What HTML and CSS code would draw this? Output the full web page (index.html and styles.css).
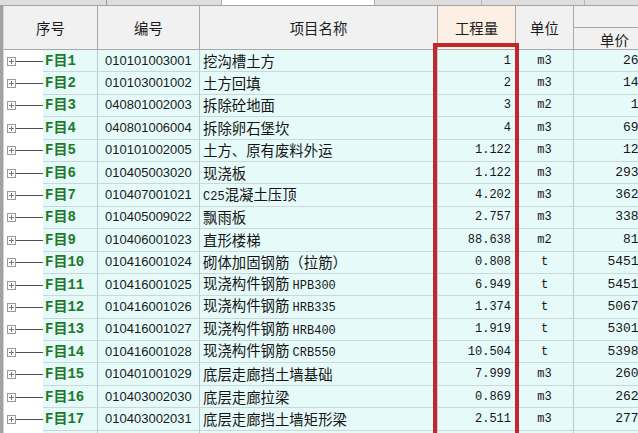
FILE: index.html
```html
<!DOCTYPE html>
<html lang="zh">
<head>
<meta charset="utf-8">
<title>分部分项</title>
<link rel="stylesheet" href="styles.css">
</head>
<body>
<div class="frame">
  <div class="topstrip">
    <span class="ts ts-1"></span>
    <span class="ts ts-2"></span>
    <span class="ts ts-3"></span>
    <span class="ts ts-4"></span>
    <span class="ts ts-5"></span>
    <span class="ts ts-6"></span>
  </div>
  <div class="gridwrap">
    <table class="grid">
      <colgroup>
        <col class="c-tree"><col class="c-lbl"><col class="c-code"><col class="c-name"><col class="c-qty"><col class="c-unit"><col class="c-price">
      </colgroup>
      <thead>
        <tr class="h1">
          <th colspan="2" rowspan="2">序号</th>
          <th rowspan="2">编号</th>
          <th rowspan="2">项目名称</th>
          <th rowspan="2" class="h-qty">工程量</th>
          <th rowspan="2">单位</th>
          <th class="h-group"></th>
        </tr>
        <tr class="h2">
          <th class="h-price">单价</th>
        </tr>
      </thead>
      <tbody>
        <tr><td class="tree"><span class="tw"><span class="box"></span><span class="ln"></span></span></td><td class="lbl">F目1</td><td class="code">010101003001</td><td class="name">挖沟槽土方</td><td class="qty">1</td><td class="unit">m3</td><td class="price">26.85</td></tr>
        <tr><td class="tree"><span class="tw"><span class="box"></span><span class="ln"></span></span></td><td class="lbl">F目2</td><td class="code">010103001002</td><td class="name">土方回填</td><td class="qty">2</td><td class="unit">m3</td><td class="price">14.92</td></tr>
        <tr><td class="tree"><span class="tw"><span class="box"></span><span class="ln"></span></span></td><td class="lbl">F目3</td><td class="code">040801002003</td><td class="name">拆除砼地面</td><td class="qty">3</td><td class="unit">m2</td><td class="price">1.96</td></tr>
        <tr><td class="tree"><span class="tw"><span class="box"></span><span class="ln"></span></span></td><td class="lbl">F目4</td><td class="code">040801006004</td><td class="name">拆除卵石堡坎</td><td class="qty">4</td><td class="unit">m3</td><td class="price">69.34</td></tr>
        <tr><td class="tree"><span class="tw"><span class="box"></span><span class="ln"></span></span></td><td class="lbl">F目5</td><td class="code">010101002005</td><td class="name">土方、原有废料外运</td><td class="qty">1.122</td><td class="unit">m3</td><td class="price">12.58</td></tr>
        <tr><td class="tree"><span class="tw"><span class="box"></span><span class="ln"></span></span></td><td class="lbl">F目6</td><td class="code">010405003020</td><td class="name">现浇板</td><td class="qty">1.122</td><td class="unit">m3</td><td class="price">293.47</td></tr>
        <tr><td class="tree"><span class="tw"><span class="box"></span><span class="ln"></span></span></td><td class="lbl">F目7</td><td class="code">010407001021</td><td class="name"><span class="asc">C25</span>混凝土压顶</td><td class="qty">4.202</td><td class="unit">m3</td><td class="price">362.15</td></tr>
        <tr><td class="tree"><span class="tw"><span class="box"></span><span class="ln"></span></span></td><td class="lbl">F目8</td><td class="code">010405009022</td><td class="name">飘雨板</td><td class="qty">2.757</td><td class="unit">m3</td><td class="price">338.62</td></tr>
        <tr><td class="tree"><span class="tw"><span class="box"></span><span class="ln"></span></span></td><td class="lbl">F目9</td><td class="code">010406001023</td><td class="name">直形楼梯</td><td class="qty">88.638</td><td class="unit">m2</td><td class="price">81.74</td></tr>
        <tr><td class="tree"><span class="tw"><span class="box"></span><span class="ln"></span></span></td><td class="lbl">F目10</td><td class="code">010416001024</td><td class="name">砌体加固钢筋（拉筋）</td><td class="qty">0.808</td><td class="unit">t</td><td class="price">5451.29</td></tr>
        <tr><td class="tree"><span class="tw"><span class="box"></span><span class="ln"></span></span></td><td class="lbl">F目11</td><td class="code">010416001025</td><td class="name">现浇构件钢筋 <span class="asc">HPB300</span></td><td class="qty">6.949</td><td class="unit">t</td><td class="price">5451.29</td></tr>
        <tr><td class="tree"><span class="tw"><span class="box"></span><span class="ln"></span></span></td><td class="lbl">F目12</td><td class="code">010416001026</td><td class="name">现浇构件钢筋 <span class="asc">HRB335</span></td><td class="qty">1.374</td><td class="unit">t</td><td class="price">5067.73</td></tr>
        <tr><td class="tree"><span class="tw"><span class="box"></span><span class="ln"></span></span></td><td class="lbl">F目13</td><td class="code">010416001027</td><td class="name">现浇构件钢筋 <span class="asc">HRB400</span></td><td class="qty">1.919</td><td class="unit">t</td><td class="price">5301.56</td></tr>
        <tr><td class="tree"><span class="tw"><span class="box"></span><span class="ln"></span></span></td><td class="lbl">F目14</td><td class="code">010416001028</td><td class="name">现浇构件钢筋 <span class="asc">CRB550</span></td><td class="qty">10.504</td><td class="unit">t</td><td class="price">5398.11</td></tr>
        <tr><td class="tree"><span class="tw"><span class="box"></span><span class="ln"></span></span></td><td class="lbl">F目15</td><td class="code">010401001029</td><td class="name">底层走廊挡土墙基础</td><td class="qty">7.999</td><td class="unit">m3</td><td class="price">260.45</td></tr>
        <tr><td class="tree"><span class="tw"><span class="box"></span><span class="ln"></span></span></td><td class="lbl">F目16</td><td class="code">010403002030</td><td class="name">底层走廊拉梁</td><td class="qty">0.869</td><td class="unit">m3</td><td class="price">262.38</td></tr>
        <tr><td class="tree"><span class="tw"><span class="box"></span><span class="ln"></span></span></td><td class="lbl">F目17</td><td class="code">010403002031</td><td class="name">底层走廊挡土墙矩形梁</td><td class="qty">2.511</td><td class="unit">m3</td><td class="price">277.90</td></tr>
        <tr><td class="tree"><span class="tw"><span class="box"></span><span class="ln"></span></span></td><td class="lbl">F目18</td><td class="code">010402001032</td><td class="name">底层走廊挡土墙</td><td class="qty">6.315</td><td class="unit">m3</td><td class="price">281.64</td></tr>
      </tbody>
    </table>
    <div class="highlight"></div>
  </div>
</div>
</body>
</html>
```
FILE: styles.css
```css
* { box-sizing: border-box; }
html, body {
  margin: 0;
  padding: 0;
  background: #ffffff;
  overflow: hidden;
}
body {
  width: 638px;
  height: 433px;
  font-family: "Noto Sans CJK SC", sans-serif;
  color: #151515;
}
.frame {
  position: relative;
  height: 433px;
  border-left: 3px solid #a2a2a2;
}
.topstrip {
  display: flex;
  height: 6px;
  background: #dedede;
  border-bottom: 1px solid #a4a4a4;
  margin-left: -3px;
}
.ts { height: 5px; }
.ts-1 { width: 107px; border-right: 1px solid #9a9a9a; }
.ts-2 { width: 114px; }
.ts-3 { width: 154px; background: #ffffff; border-left: 1px solid #b0b0b0; border-right: 1px solid #b0b0b0; }
.ts-4 { width: 107px; border-right: 1px solid #b4b4b4; }
.ts-5 { width: 103px; border-right: 1px solid #b4b4b4; }
.ts-6 { flex: 1; }

.gridwrap {
  border-left: 1px solid #d2d2d2;
  width: 700px;
}
.grid {
  border-collapse: separate;
  border-spacing: 0;
  table-layout: fixed;
  width: 665px;
}
.c-tree { width: 39px; }
.c-lbl { width: 55px; }
.c-code { width: 102px; }
.c-name { width: 238px; }
.c-qty { width: 78px; }
.c-unit { width: 58px; }
.c-price { width: 95px; }

th {
  background: #f1f1f1;
  font-weight: 400;
  font-size: 14.4px;
  color: #1c1c1c;
  border-right: 1px solid #a8a8a8;
  border-bottom: 1px solid #a8a8a8;
  padding: 0;
  text-align: center;
  line-height: 16px;
}
.h1 { height: 22px; }
.h2 { height: 22px; }
th.h-qty { background: #fcefe3; }
th.h-price { vertical-align: middle; padding-left: 0; text-align: left; padding-left: 26px; padding-top: 2px; }

tbody tr { height: 22.4px; }
td {
  padding: 0;
  background: #e6fbf9;
  border-right: 1px solid #b9cccb;
  border-bottom: 1px solid #c9d9d8;
  white-space: nowrap;
  overflow: hidden;
  line-height: 16px;
}
td.tree {
  background: #ffffff;
  border: 0;
  padding-left: 3px;
}
.tw { display: flex; align-items: center; }
.box {
  width: 9px;
  height: 9px;
  border: 1px solid #9a9a9a;
  background: linear-gradient(#7a7a7a, #7a7a7a) center / 5px 1px no-repeat,
              linear-gradient(#7a7a7a, #7a7a7a) center / 1px 5px no-repeat,
              #fbfbfb;
  flex: none;
}
.ln { flex: 1; height: 1px; background: #505050; }
td.lbl {
  color: #21792a;
  font-family: "Liberation Mono", "Noto Sans CJK SC", monospace;
  font-weight: 700;
  font-size: 14px;
  padding-left: 2px;
}
td.code {
  font-family: "Liberation Sans", sans-serif;
  font-size: 13px;
  padding-left: 7px;
  color: #1a1a1a;
}
td.name {
  font-size: 14.4px;
  padding-left: 3px;
}
.asc {
  font-family: "Liberation Mono", monospace;
  font-size: 12px;
}
td.qty {
  font-family: "Liberation Mono", monospace;
  font-size: 12px;
  text-align: right;
  padding-right: 4px;
}
td.unit {
  font-family: "Liberation Mono", monospace;
  font-size: 12px;
  text-align: center;
}
td.price {
  font-family: "Liberation Mono", monospace;
  font-size: 13px;
  text-align: right;
  padding-right: 6px;
}
.highlight {
  position: absolute;
  left: 430px;
  top: 43px;
  width: 86px;
  height: 420px;
  border: 4px solid #c4262c;
  pointer-events: none;
}
```
